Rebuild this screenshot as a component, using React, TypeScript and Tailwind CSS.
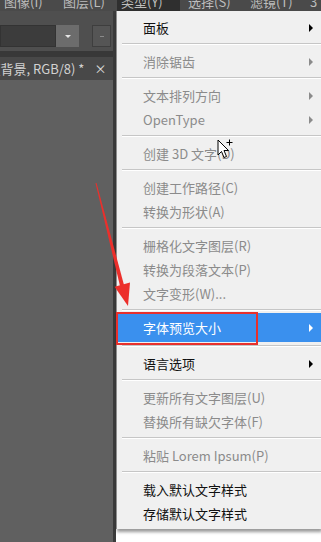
import React from "react";

type Row =
  | { kind: "item"; label: string; dark?: boolean; arrow?: boolean; active?: boolean }
  | { kind: "sep"; h?: string };

const ROWS: Row[] = [
  { kind: "item", label: "面板", dark: true, arrow: true },
  { kind: "sep" },
  { kind: "item", label: "消除锯齿", arrow: true },
  { kind: "sep" },
  { kind: "item", label: "文本排列方向", arrow: true },
  { kind: "item", label: "OpenType", arrow: true },
  { kind: "sep" },
  { kind: "item", label: "创建 3D 文字(D)" },
  { kind: "sep" },
  { kind: "item", label: "创建工作路径(C)" },
  { kind: "item", label: "转换为形状(A)" },
  { kind: "sep" },
  { kind: "item", label: "栅格化文字图层(R)" },
  { kind: "item", label: "转换为段落文本(P)" },
  { kind: "item", label: "文字变形(W)..." },
  { kind: "sep", h: "short" },
  { kind: "item", label: "字体预览大小", arrow: true, active: true },
  { kind: "sep" },
  { kind: "item", label: "语言选项", dark: true, arrow: true },
  { kind: "sep" },
  { kind: "item", label: "更新所有文字图层(U)" },
  { kind: "item", label: "替换所有缺欠字体(F)" },
  { kind: "sep" },
  { kind: "item", label: "粘贴 Lorem Ipsum(P)" },
  { kind: "sep" },
  { kind: "item", label: "载入默认文字样式", dark: true },
  { kind: "item", label: "存储默认文字样式", dark: true },
];

const font = { fontFamily: '"Noto Sans CJK SC", "Noto Sans", sans-serif' };

const Arrow = ({ color }: { color: string }) => (
  <span
    className={`ml-auto h-0 w-0 border-y-[4px] border-l-[4px] border-y-transparent ${color}`}
  />
);

const MenuBar = () => (
  <div className="flex h-[11px] shrink-0 overflow-hidden bg-[#4a4a4a] text-[13px] leading-[14px] text-[#bdbdbd]">
    <span className="-mt-[5px] ml-[4px] w-[56px]">图像(I)</span>
    <span className="-mt-[5px] ml-[3px] w-[54px]">图层(L)</span>
    <span className="-mt-[5px] w-[63px] bg-[#2f2f2f] pl-[4px]">类型(Y)</span>
    <span className="-mt-[5px] ml-[8px] w-[62px]">选择(S)</span>
    <span className="-mt-[5px] w-[60px]">滤镜(T)</span>
    <span className="-mt-[5px]">3</span>
  </div>
);

const LeftPanel = () => (
  <div className="flex w-[116px] shrink-0 flex-col border-r-[3px] border-[#3b3b3b] bg-[#606060]">
    <div className="flex h-[40px] items-end bg-[#4f4f4f] pb-[4px]">
      <div className="h-[22px] w-[56px] border border-[#333] bg-[#3c3c3c]" />
      <div className="flex h-[22px] w-[23px] items-center justify-center bg-[#6c6c6c]">
        <span className="h-0 w-0 border-x-[3px] border-t-[3px] border-x-transparent border-t-[#e6e6e6]" />
      </div>
      <div className="ml-[13px] flex h-[22px] w-[19px] items-center justify-center border border-[#3e3e3e] bg-[#555]">
        <span className="h-px w-[4px] bg-[#8a8a8a]" />
      </div>
    </div>
    <div className="h-[6px] bg-[#383838]" />
    <div className="flex h-[23px] items-center bg-[#484848] text-[13px] text-[#d2d2d2]">
      <span className="-ml-[4px] whitespace-nowrap">[背景, RGB/8) *</span>
      <span className="ml-[10px] text-[12px] text-[#e0e0e0]">×</span>
    </div>
    <div className="flex-1" />
  </div>
);

const Menu = () => (
  <div className="flex-1 self-start border-l border-[#8e8e8e] bg-[#f0f0f0] pt-[5px] pb-[3px] text-[13px] shadow-[1px_3px_3px_rgba(0,0,0,0.4)]">
    {ROWS.map((r, i) => {
      if (r.kind === "sep") {
        return (
          <div key={i} className={r.h === "short" ? "h-[7px] pt-[3px]" : "h-[10px] pt-[3px]"}>
            <div className="ml-[5px] border-t border-b border-t-[#c6c6c6] border-b-white" />
          </div>
        );
      }
      if (r.active) {
        return (
          <div key={i} className="relative flex h-[29px] items-center bg-[#3a90ee] pl-[26px] pr-[8px] text-white">
            <span>{r.label}</span>
            <Arrow color="border-l-white" />
            <div className="absolute -top-[1px] -bottom-[3px] -left-[1px] w-[142px] border-2 border-[#e8302c]" />
          </div>
        );
      }
      return (
        <div
          key={i}
          className={`flex h-6 items-center pl-[26px] pr-[8px] ${r.dark ? "text-[#111]" : "text-[#8b8b8b]"}`}
        >
          <span className="whitespace-nowrap">{r.label}</span>
          {r.arrow && <Arrow color={r.dark ? "border-l-black" : "border-l-[#8b8b8b]"} />}
        </div>
      );
    })}
  </div>
);

export default function App() {
  return (
    <div className="relative flex h-[542px] w-[321px] flex-col overflow-hidden bg-white" style={font}>
      <MenuBar />
      <div className="flex min-h-0 flex-1">
        <LeftPanel />
        <Menu />
      </div>

      {/* red annotation arrow */}
      <svg className="pointer-events-none absolute left-0 top-0" width="321" height="542">
        <polygon points="95.5,183 96.5,183 124,285 120,286" fill="#ec2f2b" />
        <polygon points="130,282.6 114.6,286.8 128,306" fill="#ec2f2b" />
      </svg>

      {/* mouse cursor */}
      <svg className="pointer-events-none absolute left-[217px] top-[139px]" width="20" height="22">
        <path
          d="M1 1 L1 16 L4.5 12.5 L7 18.5 L9.5 17.5 L7 11.5 L11.5 11.5 Z"
          fill="white"
          stroke="black"
          strokeWidth="1"
          strokeLinejoin="miter"
        />
        <path d="M12.5 0.5 V6.5 M9.5 3.5 H15.5" stroke="black" strokeWidth="1" />
      </svg>
    </div>
  );
}
